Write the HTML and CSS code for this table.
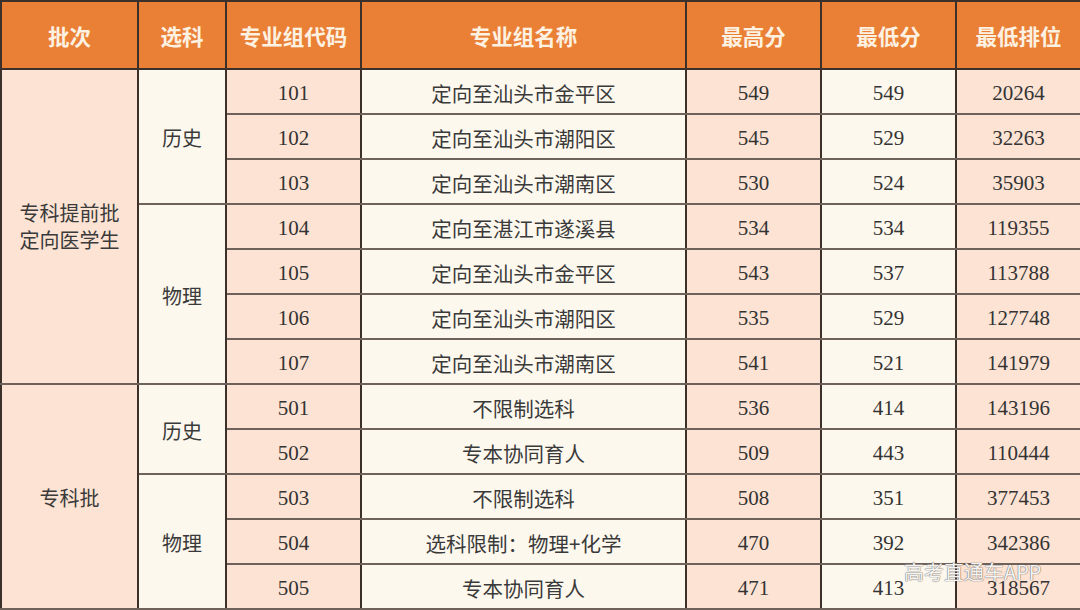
FILE: index.html
```html
<!DOCTYPE html>
<html lang="zh">
<head>
<meta charset="utf-8">
<link rel="stylesheet" href="styles.css">
</head>
<body>
<div class="wrap">
<table class="tbl">
  <colgroup>
    <col class="c1"><col class="c2"><col class="c3"><col class="c4"><col class="c5"><col class="c6"><col class="c7">
  </colgroup>
  <thead>
    <tr class="head">
      <th>批次</th><th>选科</th><th>专业组代码</th><th>专业组名称</th><th>最高分</th><th>最低分</th><th>最低排位</th>
    </tr>
  </thead>
  <tbody>
    <tr>
      <td class="peach batch" rowspan="7"><span class="batch-text top">专科提前批<br>定向医学生</span></td>
      <td class="cream subj" rowspan="3">历史</td>
      <td class="peach num">101</td><td class="cream name">定向至汕头市金平区</td><td class="peach num">549</td><td class="cream num">549</td><td class="peach num">20264</td>
    </tr>
    <tr><td class="peach num">102</td><td class="cream name">定向至汕头市潮阳区</td><td class="peach num">545</td><td class="cream num">529</td><td class="peach num">32263</td></tr>
    <tr><td class="peach num">103</td><td class="cream name">定向至汕头市潮南区</td><td class="peach num">530</td><td class="cream num">524</td><td class="peach num">35903</td></tr>
    <tr>
      <td class="cream subj" rowspan="4">物理</td>
      <td class="peach num">104</td><td class="cream name">定向至湛江市遂溪县</td><td class="peach num">534</td><td class="cream num">534</td><td class="peach num">119355</td>
    </tr>
    <tr><td class="peach num">105</td><td class="cream name">定向至汕头市金平区</td><td class="peach num">543</td><td class="cream num">537</td><td class="peach num">113788</td></tr>
    <tr><td class="peach num">106</td><td class="cream name">定向至汕头市潮阳区</td><td class="peach num">535</td><td class="cream num">529</td><td class="peach num">127748</td></tr>
    <tr><td class="peach num">107</td><td class="cream name">定向至汕头市潮南区</td><td class="peach num">541</td><td class="cream num">521</td><td class="peach num">141979</td></tr>
    <tr class="group">
      <td class="peach batch" rowspan="5">专科批</td>
      <td class="cream subj" rowspan="2">历史</td>
      <td class="peach num">501</td><td class="cream name">不限制选科</td><td class="peach num">536</td><td class="cream num">414</td><td class="peach num">143196</td>
    </tr>
    <tr><td class="peach num">502</td><td class="cream name">专本协同育人</td><td class="peach num">509</td><td class="cream num">443</td><td class="peach num">110444</td></tr>
    <tr>
      <td class="cream subj" rowspan="3">物理</td>
      <td class="peach num">503</td><td class="cream name">不限制选科</td><td class="peach num">508</td><td class="cream num">351</td><td class="peach num">377453</td>
    </tr>
    <tr><td class="peach num">504</td><td class="cream name">选科限制：物理+化学</td><td class="peach num">470</td><td class="cream num">392</td><td class="peach num">342386</td></tr>
    <tr><td class="peach num">505</td><td class="cream name">专本协同育人</td><td class="peach num">471</td><td class="cream num">413</td><td class="peach num">318567</td></tr>
  </tbody>
</table>
<div class="watermark">高考直通车APP</div>
</div>
</body>
</html>
```

FILE: styles.css
```css
html, body {
  margin: 0;
  padding: 0;
  background: #fdf8ee;
}
.wrap {
  position: relative;
  width: 1080px;
  height: 610px;
  overflow: hidden;
}
.tbl {
  width: 1080px;
  border-collapse: collapse;
  table-layout: fixed;
  font-family: "Liberation Serif", "Noto Sans CJK SC", serif;
  font-size: 21px;
  color: #333;
}
.c1 { width: 137px; }
.c2 { width: 88px; }
.c3 { width: 135px; }
.c4 { width: 325px; }
.c5 { width: 135px; }
.c6 { width: 135px; }
.c7 { width: 125px; }
.tbl th, .tbl td {
  border-left: 2px solid #3b302a;
  border-right: 2px solid #3b302a;
  border-top: 2px solid #6e625b;
  border-bottom: 2px solid #6e625b;
  text-align: center;
  vertical-align: middle;
  padding: 0;
}
.head th {
  height: 66px;
  background: #ea8035;
  color: #fdf1e2;
  font-family: "Noto Sans CJK SC", sans-serif;
  font-weight: 700;
  font-size: 21.5px;
  border-top: 2px solid #3b302a;
  border-bottom: 2px solid #3b302a;
}
.tbl td {
  height: 40px;
  padding-top: 3px;
  line-height: 24px;
}
.peach { background: #fde3d4; }
.cream { background: #fdf8ee; }
.name {
  font-family: "Noto Sans CJK SC", sans-serif;
  font-size: 20.5px;
  color: #3a3a3a;
}
.subj, .batch {
  font-family: "Noto Sans CJK SC", sans-serif;
  font-size: 20px;
  color: #3a3a3a;
}
.subj { padding-bottom: 6px; }
.batch-text.top {
  display: inline-block;
  position: relative;
  top: -2px;
  line-height: 27px;
}
.group td { border-top: 2px solid #3b302a; }
.watermark {
  position: absolute;
  left: 904px;
  top: 557px;
  font-family: "Noto Sans CJK SC", sans-serif;
  font-size: 20px;
  color: #f4f4f4;
  text-shadow: 0 0 1px #6f6660, 0 0 1px #6f6660;
}
```
